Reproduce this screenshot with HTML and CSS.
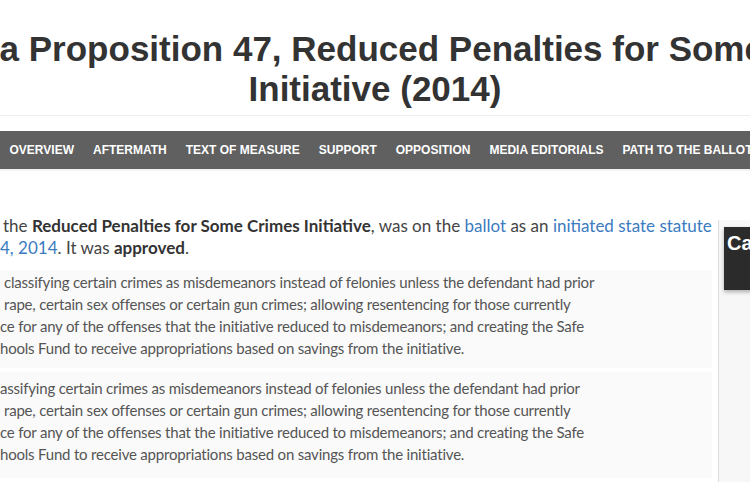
FILE: index.html
```html
<!DOCTYPE html>
<html lang="en">
<head>
  <meta charset="UTF-8" />
  <title>California Proposition 47, Reduced Penalties for Some Crimes Initiative (2014)</title>
  <link rel="stylesheet" href="styles.css">
</head>
<body>
  <header class="masthead">
    <h1>California Proposition 47, Reduced Penalties for Some Crimes<br>Initiative (2014)</h1>
  </header>

  <nav class="tabs">
    <a href="#">Overview</a>
    <a href="#">Aftermath</a>
    <a href="#">Text of measure</a>
    <a href="#">Support</a>
    <a href="#">Opposition</a>
    <a href="#">Media editorials</a>
    <a href="#">Path to the ballot</a>
  </nav>

  <div class="layout">
    <main class="article">
      <p class="lead">
        <span class="line indent">the <strong>Reduced Penalties for Some Crimes Initiative</strong>, was on the <a href="#">ballot</a> as an <a href="#">initiated state statute</a></span>
        <span class="line"><a href="#">4, 2014</a>. It was <strong>approved</strong>.</span>
      </p>

      <div class="summary">
        <span class="line indent">classifying certain crimes as misdemeanors instead of felonies unless the defendant had prior</span>
        <span class="line indent">rape, certain sex offenses or certain gun crimes; allowing resentencing for those currently</span>
        <span class="line">ce for any of the offenses that the initiative reduced to misdemeanors; and creating the Safe</span>
        <span class="line">hools Fund to receive appropriations based on savings from the initiative.</span>
      </div>

      <div class="summary second">
        <span class="line">assifying certain crimes as misdemeanors instead of felonies unless the defendant had prior</span>
        <span class="line indent">rape, certain sex offenses or certain gun crimes; allowing resentencing for those currently</span>
        <span class="line">ce for any of the offenses that the initiative reduced to misdemeanors; and creating the Safe</span>
        <span class="line">hools Fund to receive appropriations based on savings from the initiative.</span>
      </div>
    </main>

    <aside class="sidebar">
      <div class="infobox-title">California Proposition 47</div>
    </aside>
  </div>
</body>
</html>
```

FILE: styles.css
```css
html, body {
  overflow: hidden;
}
body {
  margin: 0;
  background: #fff;
  font-family: Lato, 'Open Sans', sans-serif;
  color: #333;
}
a {
  color: #3b7bbf;
  text-decoration: none;
}
.masthead {
  margin: 0 -400px 0 -400px;
  padding: 29px 0 6px;
  border-bottom: 1px solid #eee;
}
.masthead h1 {
  margin: 0;
  font-family: 'Liberation Sans', Arial, sans-serif;
  font-size: 35px;
  line-height: 40px;
  font-weight: bold;
  color: #333;
  text-align: center;
  white-space: nowrap;
}
.tabs {
  display: flex;
  margin-top: 15px;
  height: 38px;
  align-items: center;
  background: #606060;
  border-bottom: 2px solid #f2f2f2;
}
.tabs a {
  padding: 0 9.5px;
  font-family: 'Liberation Sans', Arial, sans-serif;
  font-size: 12px;
  font-weight: bold;
  color: #fff;
  text-transform: uppercase;
  white-space: nowrap;
}
.layout {
  display: flex;
  margin-top: 44px;
  gap: 6px;
}
.article {
  width: 712px;
  flex: none;
}
.line {
  display: block;
  white-space: nowrap;
}
.line.indent {
  padding-left: 4px;
}
.lead {
  margin: 0 0 11px;
  font-size: 17px;
  line-height: 22px;
  color: #444;
}
.lead .indent {
  padding-left: 3px;
}
.lead strong {
  color: #333;
}
.summary {
  background: #fafafa;
  padding: 1px 0 9px;
  margin-bottom: 4px;
  font-size: 15px;
  letter-spacing: -0.2px;
  line-height: 22px;
  color: #555;
}
.summary.second {
  padding: 5px 0 13px;
}
.sidebar {
  flex: 1;
  margin-top: 5px;
  min-height: 300px;
  background: #f7f7f7;
  border-left: 1px solid #ddd;
  padding: 7px 0 0 5px;
}
.infobox-title {
  height: 63px;
  padding: 5px 0 0 3px;
  box-sizing: border-box;
  background: #2b2b2b;
  color: #fff;
  font-family: 'Liberation Sans', Arial, sans-serif;
  font-size: 20px;
  font-weight: bold;
  white-space: nowrap;
  box-shadow: 0 2px 4px rgba(0,0,0,0.3);
}
```
